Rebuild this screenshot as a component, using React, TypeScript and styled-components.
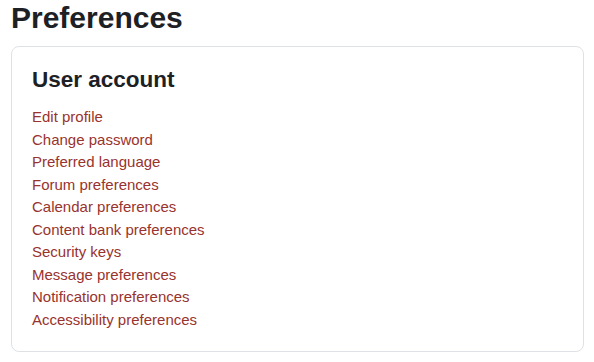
import React from "react";
import styled, { createGlobalStyle } from "styled-components";

const GlobalStyle = createGlobalStyle`
  body {
    margin: 0;
    background: #fff;
    font-family: "Liberation Sans", Arial, sans-serif;
    color: #1d2125;
  }
`;

const links = [
  "Edit profile",
  "Change password",
  "Preferred language",
  "Forum preferences",
  "Calendar preferences",
  "Content bank preferences",
  "Security keys",
  "Message preferences",
  "Notification preferences",
  "Accessibility preferences",
];

const Preferences = () => {
  return (
    <Page>
      <GlobalStyle />
      <PageTitle>Preferences</PageTitle>
      <Card>
        <CardTitle>User account</CardTitle>
        <LinkList>
          {links.map((label) => (
            <li key={label}>
              <PrefLink href="#">{label}</PrefLink>
            </li>
          ))}
        </LinkList>
      </Card>
    </Page>
  );
};

export default Preferences;

const Page = styled.div`
  padding: 0 10px 0 11px;
`;

const PageTitle = styled.h2`
  margin: 0 0 10px;
  font-size: 30px;
  line-height: 1.2;
  font-weight: 700;
  color: #1d2125;
`;

const Card = styled.section`
  border: 1px solid #dee2e6;
  border-radius: 8px;
  padding: 19px 20px 20px;
`;

const CardTitle = styled.h3`
  margin: 0 0 13px;
  font-size: 22.5px;
  line-height: 1.2;
  font-weight: 700;
  color: #1d2125;
`;

const LinkList = styled.ul`
  list-style: none;
  margin: 0;
  padding: 0;
  font-size: 15px;
  line-height: 22.5px;
`;

const PrefLink = styled.a`
  color: #98332e;
  text-decoration: none;
`;
